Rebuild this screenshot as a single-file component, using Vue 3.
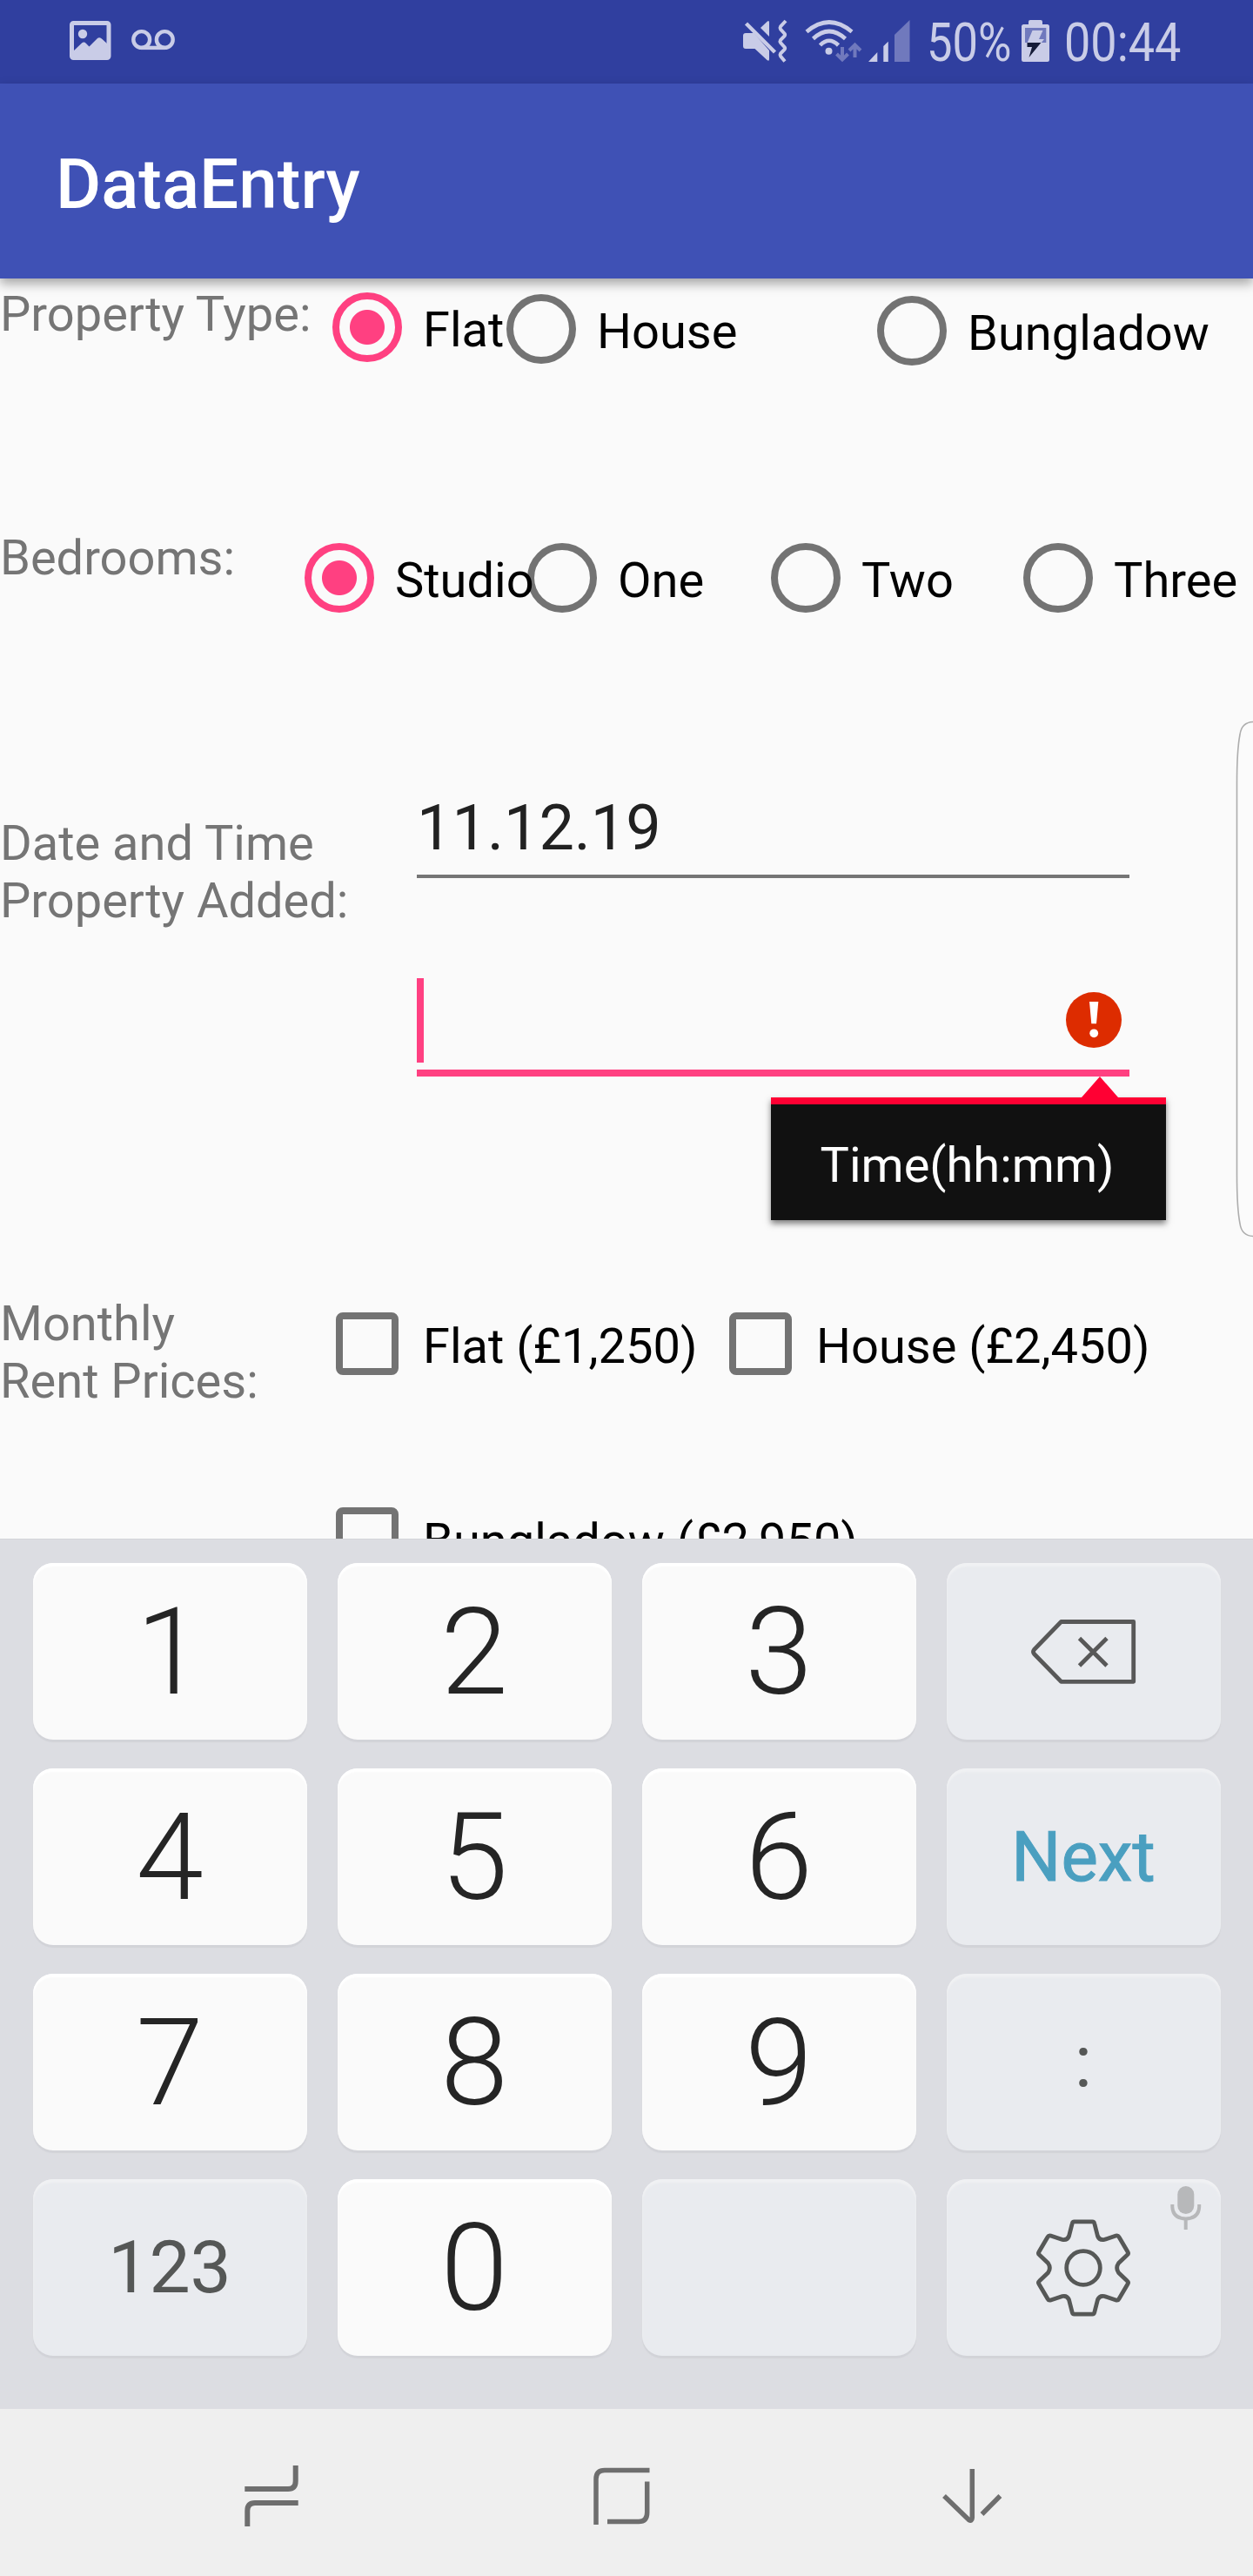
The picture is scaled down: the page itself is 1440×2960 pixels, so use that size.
<script setup>
const propertyTypes = [
  { label: 'Flat', checked: true },
  { label: 'House', checked: false },
  { label: 'Bungladow', checked: false },
]

const bedrooms = [
  { label: 'Studio', checked: true },
  { label: 'One', checked: false },
  { label: 'Two', checked: false },
  { label: 'Three', checked: false },
]

const rents = ['Flat (£1,250)', 'House (£2,450)', 'Bungladow (£2,950)']

const keys = [
  { id: '1', kind: 'digit' },
  { id: '2', kind: 'digit' },
  { id: '3', kind: 'digit' },
  { id: 'backspace', kind: 'fn' },
  { id: '4', kind: 'digit' },
  { id: '5', kind: 'digit' },
  { id: '6', kind: 'digit' },
  { id: 'Next', kind: 'fn', text: 'next' },
  { id: '7', kind: 'digit' },
  { id: '8', kind: 'digit' },
  { id: '9', kind: 'digit' },
  { id: ':', kind: 'fn', text: 'colon' },
  { id: '123', kind: 'fn', text: 'mode' },
  { id: '0', kind: 'digit' },
  { id: 'blank', kind: 'fn' },
  { id: 'settings', kind: 'fn' },
]
</script>

<template>
  <div class="screen">
    <header class="status">
      <svg class="ic-left" width="124" height="48" viewBox="80 23 124 48">
        <rect x="82.5" y="26.5" width="42.5" height="40" rx="2" fill="none" stroke="#c9cce7" stroke-width="5" />
        <circle cx="95" cy="39" r="5.2" fill="#c9cce7" />
        <path d="M84 59 L94 49.5 Q96.5 47.5 99 50 L102.5 53.5 L111.500 44.500 Q114.500 42 117.500 45 L124 51 V67 H84 Z" fill="#c9cce7" />
        <circle cx="162.700" cy="45.500" r="9.400" fill="none" stroke="#c9cce7" stroke-width="4.400" />
        <circle cx="189.300" cy="45.500" r="9.400" fill="none" stroke="#c9cce7" stroke-width="4.400" />
        <path d="M162 54.900 H190" stroke="#c9cce7" stroke-width="4.400" />
      </svg>
      <svg class="ic-right" width="196" height="50" viewBox="852 22 196 50">
        <g fill="#c9cce7">
          <path d="M857 38 H866.500 L884 58 V68 Q884 71 881.500 69 L867.500 56 H857 Q854 56 854 53 V41 Q854 38 857 38 Z" />
          <path d="M874 32 L882 24.500 Q884 23 884 26 V42 Z" />
          <circle cx="952.500" cy="58.700" r="4" />
          <path d="M998 71 H1008.300 V60 Z M1015.300 71 H1020.800 V47.700 L1015.300 53 Z" />
        </g>
        <path d="M857.500 27 L890.500 60" stroke="#c9cce7" stroke-width="4.500" />
        <g fill="none" stroke="#c9cce7" stroke-width="4.600">
          <path d="M903 24 L897 30.500 Q896 32 897 33.500 L901.500 38.500 Q902.700 40 901.500 41.500 L897 46 Q896 47.500 897 49 L901.500 54 Q902.700 55.500 901.500 57 L897 61.500 Q896 63 897 64.500 L902 70.500" stroke-width="4" />
          <path d="M927 36.500 Q952.800 14.500 979 36.500" />
          <path d="M934.500 44.500 Q952.800 27.500 971.500 44.500" />
          <path d="M942.500 52 Q952.800 41.500 963.500 52" />
        </g>
        <g fill="none" stroke="#7079bd" stroke-width="4">
          <path d="M968 54 V68 M961.500 62 L968 68.500 L974.500 62" />
          <path d="M982.500 66 V52 M976 58 L982.500 51.500 L989 58" />
        </g>
        <path d="M1028 71 H1045.500 V23 L1028 40 Z" fill="#7079bd" />
      </svg>
      <span class="pct"><i>50%</i></span>
      <svg class="ic-batt" width="32" height="48" viewBox="1174 23 32 48">
        <path d="M1182 28 V25 Q1182 23 1184 23 H1196 Q1198 23 1198 25 V28 H1203.500 Q1206 28 1206 30.500 V68.500 Q1206 71 1203.500 71 H1176.500 Q1174 71 1174 68.500 V30.500 Q1174 28 1176.500 28 Z" fill="#c9cce7" />
        <path d="M1178 32 H1202.300 V49 H1178 Z" fill="#7079bd" />
        <path d="M1186.500 35 H1198.500 L1194 45 H1200 L1196.400 49.500 H1180.500 Z" fill="#c9cce7" />
        <path d="M1180.500 49 H1196.400 L1182.500 66 L1186 54 H1180.500 Z" fill="#151b38" />
      </svg>
      <span class="clock"><i>00:44</i></span>
    </header>

    <div class="appbar">DataEntry</div>

    <main class="form">
      <section class="row type-row">
        <div class="label">Property Type:</div>
        <div v-for="o in propertyTypes" :key="o.label" class="choice">
          <span class="radio" :class="{ on: o.checked }"></span>
          <span class="text">{{ o.label }}</span>
        </div>
      </section>

      <section class="row bed-row">
        <div class="label">Bedrooms:</div>
        <div v-for="o in bedrooms" :key="o.label" class="choice">
          <span class="radio" :class="{ on: o.checked }"></span>
          <span class="text">{{ o.label }}</span>
        </div>
      </section>

      <section class="row date-row">
        <div class="label">Date and Time<br />Property Added:</div>
        <div class="fields">
          <div class="field">11.12.19</div>
          <div class="field active">
            <span class="caret"></span>
            <svg class="error" width="64" height="64" viewBox="0 0 64 64">
              <circle cx="32" cy="32" r="32" fill="#dd2c00" />
              <path d="M27 11 H37.300 L35 36.300 H29.300 Z" fill="#fff" />
              <circle cx="32.200" cy="47.300" r="4.900" fill="#fff" />
            </svg>
            <div class="popup">Time(hh:mm)</div>
          </div>
        </div>
      </section>

      <section class="row rent-row">
        <div class="label">Monthly<br />Rent Prices:</div>
        <div v-for="r in rents" :key="r" class="choice">
          <span class="check"></span>
          <span class="text">{{ r }}</span>
        </div>
      </section>

      <svg class="edge" width="24" height="596" viewBox="1416 827 24 596">
        <path d="M1441 829.500 Q1427 829.500 1425 844 Q1421.500 862 1421.500 900 V1350 Q1421.500 1388 1425 1406 Q1427 1420.500 1441 1420.500" fill="#fbfbfb" stroke="#adadad" stroke-width="1.600" />
      </svg>
    </main>

    <section class="keyboard">
      <div v-for="k in keys" :key="k.id" class="key" :class="[k.kind, k.text]">
        <span v-if="k.kind === 'digit' || k.text">{{ k.id }}</span>
        <svg v-else-if="k.id === 'backspace'" width="124" height="80" viewBox="1183 1858 124 80" fill="none" stroke="#585858" stroke-width="4.800" stroke-linejoin="round">
          <path d="M1219.500 1863.500 H1302.700 V1932.300 H1219.500 L1188.500 1900.500 Q1186.500 1898 1188.500 1895.500 Z" />
          <path d="M1240.500 1882.500 L1272 1914 M1272 1882.500 L1240.500 1914" />
        </svg>
        <template v-else-if="k.id === 'settings'">
          <svg width="116" height="120" viewBox="-58 -60 116 120" fill="none" stroke="#565857" stroke-width="4.800" stroke-linejoin="round">
            <circle r="19.300" />
            <path d="M-10.500 -53.200 H10.500 Q12.300 -53.200 12.800 -51 L16.500 -36.500 Q18.500 -31.500 24 -32.500 L37.500 -37 Q39.800 -37.700 41 -35.500 L51 -18.500 Q52.300 -16.500 50.500 -15 L40.500 -5.500 Q36.800 0 40.500 5.500 L50.500 15 Q52.300 16.500 51 18.500 L41 35.500 Q39.800 37.700 37.500 37 L24 32.500 Q18.500 31.500 16.500 36.500 L12.800 51 Q12.300 53.200 10.500 53.200 H-10.500 Q-12.300 53.200 -12.800 51 L-16.500 36.500 Q-18.500 31.500 -24 32.500 L-37.500 37 Q-39.800 37.700 -41 35.500 L-51 18.500 Q-52.300 16.500 -50.500 15 L-40.500 5.500 Q-36.800 0 -40.500 -5.500 L-50.500 -15 Q-52.300 -16.500 -51 -18.500 L-41 -35.500 Q-39.800 -37.700 -37.500 -37 L-24 -32.500 Q-18.500 -31.500 -16.500 -36.500 L-12.800 -51 Q-12.300 -53.200 -10.500 -53.200 Z" />
          </svg>
          <svg class="mic" width="36" height="52" viewBox="1344 2511 36 52">
            <rect x="1352.300" y="2512" width="19" height="32" rx="9.500" fill="#b7b8ba" />
            <path d="M1346.300 2533 V2536 Q1347 2549 1361.700 2549.500 Q1376.500 2549 1377.200 2536 V2533" fill="none" stroke="#b7b8ba" stroke-width="4" />
            <path d="M1361.700 2549 V2562" stroke="#b7b8ba" stroke-width="4" />
          </svg>
        </template>
      </div>
    </section>

    <nav class="nav">
      <svg width="66" height="72" viewBox="279 2832 66 72" fill="none" stroke="#6e6e6e" stroke-width="6">
        <path d="M339.700 2833 V2851 Q339.700 2860 331 2860 H281.300" />
        <path d="M342.700 2876 H293 Q284.300 2876 284.300 2885 V2903" />
      </svg>
      <svg width="66" height="68" viewBox="681 2834 66 68" fill="none" stroke="#6e6e6e" stroke-width="5.500">
        <path d="M746.500 2838.500 H695 Q685 2838.500 685 2848.500 V2901" />
        <path d="M743.700 2851.500 V2887 Q743.700 2897.500 734 2897.500 H698" />
      </svg>
      <svg width="70" height="64" viewBox="1082 2836 70 64" fill="none" stroke="#6e6e6e" stroke-width="5.500">
        <path d="M1117.300 2837 V2893 Q1117 2897.500 1113.500 2895.500 L1085 2868" />
        <path d="M1149.400 2868 L1128.500 2889" />
      </svg>
    </nav>
  </div>
</template>

<style>
body {
  margin: 0;
}
</style>

<style scoped>
.screen {
  width: 1440px;
  height: 2960px;
  display: flex;
  flex-direction: column;
  overflow: hidden;
  background: #fafafa;
  font-family: Roboto, 'Liberation Sans', sans-serif;
  font-size: 56px;
  line-height: 66px;
  white-space: nowrap;
}
svg {
  display: block;
  flex: none;
}

.status {
  height: 96px;
  flex: none;
  display: flex;
  align-items: flex-start;
  background: #303f9f;
  color: #c9cce7;
}
.ic-left {
  margin: 23px 0 0 80px;
}
.ic-right {
  margin: 22px 0 0 648px;
}
.pct,
.clock {
  margin-top: 14px;
  font-size: 61px;
  line-height: 70px;
}
.pct {
  width: 106px;
  margin-left: 17px;
}
.clock {
  margin-left: 17px;
}
.pct i,
.clock i {
  display: inline-block;
  font-style: normal;
  transform-origin: 0 50%;
}
.pct i {
  transform: scaleX(0.86);
}
.clock i {
  transform: scaleX(0.885);
}
.ic-batt {
  margin: 23px 0 0 3px;
}

.appbar {
  position: relative;
  z-index: 2;
  height: 224px;
  flex: none;
  box-sizing: border-box;
  padding: 76px 0 0 64px;
  background: #3f51b5;
  color: #fff;
  font-size: 80px;
  font-weight: 500;
  line-height: 80px;
  box-shadow: 0 6px 12px rgba(0, 0, 0, 0.34);
}

.form {
  position: relative;
  height: 1448px;
  flex: none;
  overflow: hidden;
}
.row {
  display: grid;
  align-items: start;
}
.type-row {
  grid-template-columns: 358px 200px 426px 1fr;
  height: 280px;
}
.bed-row {
  grid-template-columns: 326px 256px 280px 290px 1fr;
  height: 300px;
}
.date-row {
  grid-template-columns: 479px 819px;
  height: 580px;
}
.rent-row {
  grid-template-columns: 358px 452px 1fr;
  grid-template-rows: 248px 1fr;
  height: 500px;
}
.label {
  padding-top: 8px;
  color: #757575;
}
.date-row .label {
  padding-top: 36px;
}
.choice {
  display: flex;
  align-items: center;
  height: 80px;
  margin-top: 24px;
  color: #000;
}
.type-row .choice {
  margin-top: 16px;
}
.type-row .choice:nth-child(3) {
  margin-top: 18px;
}
.type-row .choice:nth-child(4) {
  margin-top: 20px;
}
.choice .text {
  padding-top: 6px;
}
.radio {
  width: 80px;
  height: 80px;
  box-sizing: border-box;
  flex: none;
  margin: 0 24px;
  border: 8px solid rgba(0, 0, 0, 0.54);
  border-radius: 50%;
}
.radio.on {
  border-color: #ff4081;
  background: radial-gradient(circle, #ff4081 19.5px, transparent 20.5px);
}
.check {
  width: 72px;
  height: 72px;
  box-sizing: border-box;
  flex: none;
  margin: 0 28px;
  border: 8px solid #737373;
  border-radius: 8px;
}
.rent-row .choice:nth-child(4) {
  grid-column: 2 / 4;
  margin-top: 0;
}

.fields {
  display: flex;
  flex-direction: column;
}
.field {
  height: 108.500px;
  box-sizing: border-box;
  padding-top: 10px;
  border-bottom: 4px solid #757575;
  color: #212121;
  font-size: 72px;
  line-height: 84px;
}
.field.active {
  position: relative;
  display: flex;
  height: 128px;
  margin-top: 100.500px;
  padding: 15px 9px 0 0;
  justify-content: space-between;
  border-bottom: 8px solid #ff4081;
}
.caret {
  width: 8px;
  height: 97px;
  background: #ff4081;
}
.error {
  margin-top: 16px;
}
.popup {
  position: absolute;
  right: -42px;
  top: 152px;
  width: 454px;
  height: 141px;
  box-sizing: border-box;
  padding: 37px 3px 0 0;
  border-top: 8px solid #ff0033;
  background: #111;
  color: #fff;
  font-size: 56px;
  line-height: 66px;
  text-align: center;
  box-shadow: 0 4px 7px rgba(0, 0, 0, 0.5);
}
.popup::before {
  content: '';
  position: absolute;
  right: 55px;
  top: -32px;
  border: 21px solid transparent;
  border-top: 0;
  border-bottom: 24px solid #ff0033;
}
.edge {
  position: absolute;
  right: 0;
  top: 507px;
}

.keyboard {
  height: 1000px;
  flex: none;
  box-sizing: border-box;
  display: grid;
  grid-template-columns: repeat(4, 315px);
  grid-auto-rows: 203px;
  gap: 33px 35px;
  padding: 27px 37.500px 0;
  border-top: 1px solid #d3d4d8;
  background: #dcdde2;
}
.key {
  position: relative;
  display: flex;
  align-items: center;
  justify-content: center;
  border-radius: 23px;
}
.digit {
  background: #fafafa;
  color: #252525;
  font-size: 140px;
  font-weight: 300;
  box-shadow: inset 0 4px 2px #fff, 0 3px 1px #d2d3d8;
}
.fn {
  background: #e9ebef;
  color: #555756;
  font-size: 84px;
  box-shadow: inset 0 4px 2px #f0f1f3, 0 3px 1px #d2d3d8;
}
.next {
  color: #4a9fc0;
  font-size: 80px;
  -webkit-text-stroke: 1px #4a9fc0;
}
.mic {
  position: absolute;
  right: 22px;
  top: 7px;
}

.nav {
  height: 192px;
  flex: none;
  box-sizing: border-box;
  display: flex;
  align-items: center;
  justify-content: space-between;
  padding: 8px 288px 0 279px;
  background: #efefef;
}
</style>
